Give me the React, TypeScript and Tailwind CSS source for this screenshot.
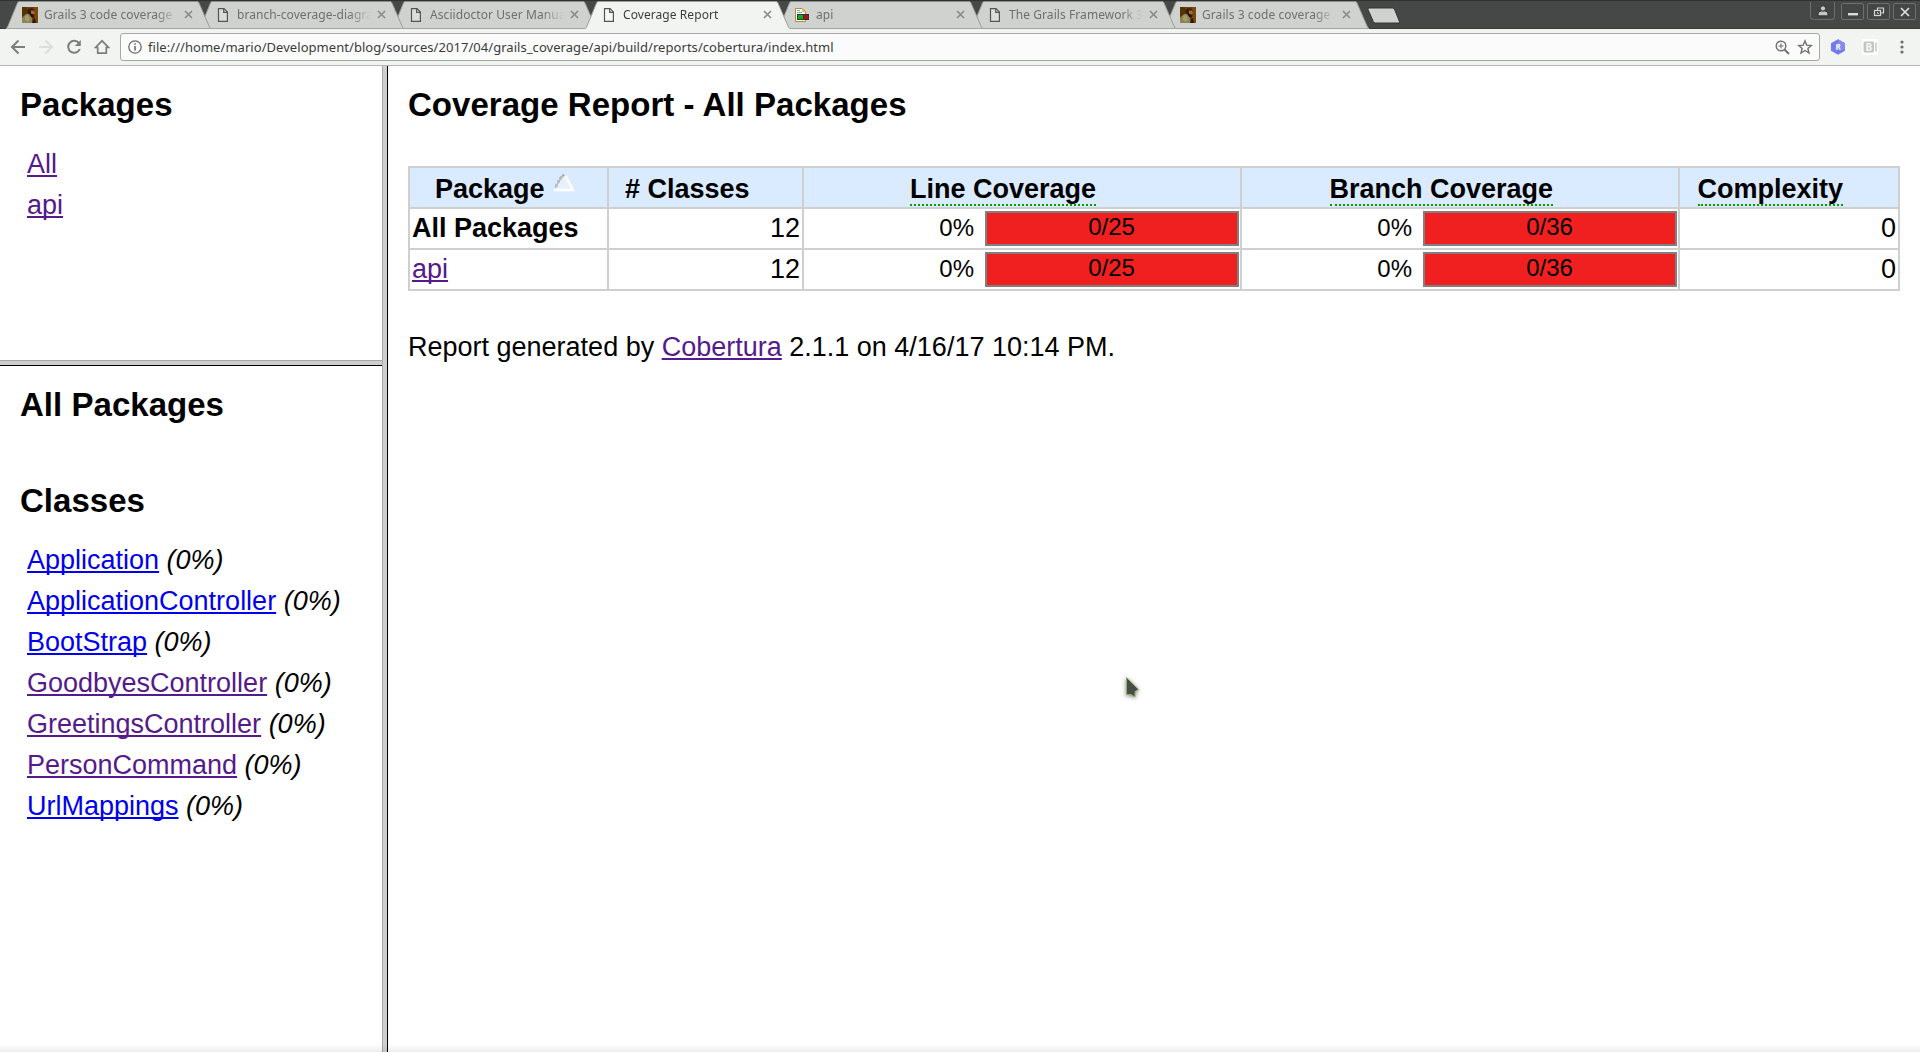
import { ReactNode } from "react";

type TabIcon = "photo" | "page" | "report";
interface Tab {
  title: string;
  icon: TabIcon;
  active?: boolean;
}

const tabs: Tab[] = [
  { title: "Grails 3 code coverage", icon: "photo" },
  { title: "branch-coverage-diagra", icon: "page" },
  { title: "Asciidoctor User Manua", icon: "page" },
  { title: "Coverage Report", icon: "page", active: true },
  { title: "api", icon: "report" },
  { title: "The Grails Framework 3", icon: "page" },
  { title: "Grails 3 code coverage", icon: "photo" },
];

const stack = ["z-[7]", "z-[6]", "z-[5]", "z-[8]", "z-[4]", "z-[3]", "z-[2]"];

const classes = [
  { name: "Application", visited: false },
  { name: "ApplicationController", visited: false },
  { name: "BootStrap", visited: false },
  { name: "GoodbyesController", visited: true },
  { name: "GreetingsController", visited: true },
  { name: "PersonCommand", visited: true },
  { name: "UrlMappings", visited: false },
];

function Favicon({ kind }: { kind: TabIcon }) {
  if (kind === "photo")
    return (
      <svg width="16" height="16" viewBox="0 0 16 16" className="shrink-0">
        <rect width="16" height="16" fill="#6b4005" />
        <rect width="5" height="9" fill="#573203" />
        <rect x="12" width="4" height="16" fill="#7a4b08" />
        <path d="M5 3 Q8 0 12 2 L13 6 L12 10 L9 10 L6 7 Z" fill="#3a1c0c" />
        <path d="M9 3.5 L12 3.5 L13 6 L12 8 L9 7 Z" fill="#a5683f" />
        <path d="M8 6 L12 8 L11.5 11 L8 9 Z" fill="#2a1108" />
        <path d="M0 11 L4 7 L7 7 L10 11 L11 16 L0 16 Z" fill="#8b8455" />
        <path d="M3 9 L6 8 L8 12 L6 15 L3 13 Z" fill="#a39b6b" />
        <path d="M11 12 L13 11 L14 16 L10 16 Z" fill="#301806" />
      </svg>
    );
  if (kind === "report")
    return (
      <svg width="16" height="16" viewBox="0 0 16 16" className="shrink-0">
        <path d="M1.5 1.5 H8.500 L11.5 4.5 V14.500 H1.5 Z" fill="#fff" stroke="#b08a3a" />
        <path d="M8 1 V5 H12 Z" fill="#e6bd57" />
        <path d="M3 3.5 H6 M3 5.5 H8" stroke="#7f9fd0" />
        <rect x="3.5" y="7.5" width="6" height="5" fill="#10b010" stroke="#333" />
        <rect x="9.5" y="7.5" width="5" height="5" fill="#b01018" stroke="#333" />
      </svg>
    );
  return (
    <svg width="16" height="16" viewBox="0 0 16 16" className="shrink-0">
      <path d="M3.5 1.6 H9 L12.4 5 V14.4 H3.5 Z" fill="#fff" fillOpacity=".25" stroke="#555" strokeWidth="1.2" />
      <path d="M8.7 1.6 V5.4 H12.4" fill="none" stroke="#555" strokeWidth="1.2" />
    </svg>
  );
}

function BrowserTab({ tab, order }: { tab: Tab; order: string }) {
  const fill = tab.active ? "#f2f4f2" : "#d0d2cf";
  const text = tab.active ? "text-[#3c3e3c]" : "text-[#6e706e]";
  return (
    <div className={`relative -ml-3 flex h-[29px] w-[205px] shrink-0 items-center ${order}`}>
      <svg width="205" height="29" className="absolute inset-0">
        <path d="M0 29 L2 26 L11.5 3 Q12 1.5 13.5 1.5 H191 Q192.500 1.500 193 3 L203 26 L205 29 Z" fill={fill} />
        <path
          d="M0.500 28.500 L2 26 L11.500 3 Q12 1.500 13.500 1.500 M191 1.500 Q192.500 1.500 193 3 L203 26 L204.500 28.500"
          fill="none"
          stroke="#9c9e9c"
        />
        {!tab.active && <path d="M0 28.500 H205" stroke="#a4a6a4" />}
      </svg>
      <div className="relative flex w-full items-center pl-4">
        <Favicon kind={tab.icon} />
        <div className="ml-1.5 w-[135px] [mask-image:linear-gradient(to_right,black_112px,transparent_134px)]">
          <span className={`block text-[12px] leading-[18px] tracking-[0.07px] whitespace-nowrap ${text}`}>{tab.title}</span>
        </div>
        <svg width="9" height="9" viewBox="0 0 9 9" className="ml-[5px] shrink-0">
          <path d="M1 1 L8 8 M8 1 L1 8" stroke="#8a8c8a" strokeWidth="1.7" />
        </svg>
      </div>
    </div>
  );
}

function WindowButton({ children }: { children: ReactNode }) {
  return (
    <div className="flex h-[17px] w-[23px] items-center justify-center rounded-[2px] border border-[#6d6f6d] bg-[#434644]">
      {children}
    </div>
  );
}

function TabStrip() {
  return (
    <div className="flex h-[29px] border-b border-[#393b39] bg-[#454846] pl-[18px] shadow-[inset_0_1px_0_#303230]">
      {tabs.map((t, i) => (
        <BrowserTab key={i} tab={t} order={stack[i]} />
      ))}
      <svg width="36" height="20" viewBox="0 0 36 20" className="mt-[6px] -ml-[3px]">
        <path d="M3 2 H26.500 Q28 2 28.800 4 L34 17 H9.500 Q8 17 7.300 15.500 L2 3.500 Q2 2 3 2 Z" fill="#d0d2cf" stroke="#343634" />
      </svg>
      <div className="mt-[3px] mr-[4px] ml-auto flex gap-[3px]">
        <div className="mr-[3px] -mt-px flex h-[18px] w-[25px] items-center justify-center rounded-b border border-t-0 border-[#6d6f6d] bg-[#434644]">
          <svg width="12" height="12" viewBox="0 0 12 12" fill="#c4c6c4" stroke="#202220" strokeWidth=".8">
            <path d="M1 10.800 V9 Q1 6 4.500 6 H7.500 Q11 6 11 9 V10.800 Z" />
            <circle cx="6" cy="3.400" r="2.600" />
          </svg>
        </div>
        <WindowButton>
          <svg width="12" height="12" viewBox="0 0 12 12">
            <rect x="1" y="7" width="10" height="2.400" fill="#dadcda" />
          </svg>
        </WindowButton>
        <WindowButton>
          <svg width="12" height="12" viewBox="0 0 12 12" fill="none" stroke="#d4d6d4" strokeWidth="1.200">
            <path d="M4.500 4 V2 H10.500 V7 H8" />
            <rect x="1.500" y="4.500" width="6" height="5" />
            <path d="M4.500 6 V7.500 H6" strokeWidth=".8" />
          </svg>
        </WindowButton>
        <WindowButton>
          <svg width="12" height="12" viewBox="0 0 12 12">
            <path d="M2 2 L10 10 M10 2 L2 10" stroke="#dcdedc" strokeWidth="1.700" />
          </svg>
        </WindowButton>
      </div>
    </div>
  );
}

function Toolbar() {
  return (
    <div className="flex h-[37px] items-center border-b border-[#b4b6b4] bg-[#f2f4f2]">
      <div className="flex items-center gap-3 pl-[10px]">
        <svg width="16" height="16" viewBox="0 0 16 16" fill="none" stroke="#7c7e7c" strokeWidth="2">
          <path d="M15 8 H2.500 M8.500 1.500 L2 8 L8.500 14.500" />
        </svg>
        <svg width="16" height="16" viewBox="0 0 16 16" fill="none" stroke="#dcdedc" strokeWidth="2">
          <path d="M1 8 H13.500 M7.500 1.500 L14 8 L7.500 14.500" />
        </svg>
        <svg width="16" height="16" viewBox="0 0 16 16">
          <path d="M13 4.200 A6 6 0 1 0 13.800 10" fill="none" stroke="#7c7e7c" strokeWidth="2" />
          <path d="M14.800 1 V7 H8.800 Z" fill="#7c7e7c" />
        </svg>
        <svg width="16" height="16" viewBox="0 0 16 16" fill="none" stroke="#7c7e7c" strokeWidth="1.700">
          <path d="M1.500 8.500 L8 1.800 L14.500 8.500 H12.300 V14.200 H3.700 V8.500 Z" />
        </svg>
      </div>
      <div className="ml-[10px] flex h-7 w-[1700px] items-center rounded-[3px] border border-[#a6a8a6] bg-[#fafbfa]">
        <svg width="14" height="14" viewBox="0 0 14 14" className="ml-[7px]">
          <circle cx="7" cy="7" r="6.200" fill="none" stroke="#6a6c6a" strokeWidth="1.300" />
          <path d="M7 6 V10.500 M7 3.300 V4.800" stroke="#6a6c6a" strokeWidth="1.600" />
        </svg>
        <span className="ml-[6px] text-[13px] leading-[20px] tracking-[0.05px] whitespace-nowrap text-[#3a3c3a]">
          file:///home/mario/Development/blog/sources/2017/04/grails_coverage/api/build/reports/cobertura/index.html
        </span>
        <svg width="15" height="15" viewBox="0 0 15 15" className="ml-auto" fill="none" stroke="#6e706e">
          <circle cx="6" cy="6" r="4.800" strokeWidth="1.400" />
          <path d="M9.500 9.500 L14 14" strokeWidth="1.900" />
          <path d="M3.500 6 H8.500 M6 3.500 V8.500" strokeWidth="1.100" />
        </svg>
        <svg width="16" height="16" viewBox="0 0 16 16" className="mr-[6px] ml-[7px]" fill="none" stroke="#6e706e" strokeWidth="1.400">
          <path d="M8 1.900 L9.800 6.200 L14.300 6.500 L10.900 9.400 L12 14 L8 11.500 L4 14 L5.100 9.400 L1.700 6.500 L6.200 6.200 Z" />
        </svg>
      </div>
      <div className="flex items-center pl-[10px]">
        <div className="relative flex h-4 w-4 items-center justify-center">
          <svg width="16" height="16" viewBox="0 0 16 16" className="absolute inset-0">
            <path d="M8 0.300 L15 4.200 V11.800 L8 15.700 L1 11.800 V4.200 Z" fill="#7279ee" />
            <path d="M8 0.300 L15 4.200 V11.800 L8 8 Z" fill="#858bf4" />
          </svg>
          <span className="relative text-[8px] leading-none font-bold text-white">R</span>
        </div>
        <div className="relative ml-4 flex h-4 w-4 bg-white">
          <svg width="16" height="16" viewBox="0 0 16 16" className="absolute inset-0">
            <rect x="1.500" y="2.500" width="10.500" height="11" rx="1.500" fill="#c4c4c4" />
            <path d="M14 3.500 V12.500" stroke="#c0c0c0" strokeWidth="1.400" />
          </svg>
          <span className="relative ml-[3.500px] text-[10px] leading-[16px] font-bold text-[#f6f6f6]">B</span>
        </div>
        <svg width="4" height="14" viewBox="0 0 4 14" className="ml-[22px]" fill="#6a6c6a">
          <circle cx="2" cy="2" r="1.600" />
          <circle cx="2" cy="7" r="1.600" />
          <circle cx="2" cy="12" r="1.600" />
        </svg>
      </div>
    </div>
  );
}

function Link({ children, visited = true }: { children: ReactNode; visited?: boolean }) {
  return (
    <a
      className={`underline decoration-2 underline-offset-[2px] [text-decoration-skip-ink:none] ${
        visited ? "text-[#551a8b]" : "text-[#0000ee]"
      }`}
    >
      {children}
    </a>
  );
}

function Heading({ children }: { children: ReactNode }) {
  return <h5 className="text-[33px] leading-[38px] font-bold tracking-[0.03px] whitespace-nowrap">{children}</h5>;
}

function Term({ children }: { children: ReactNode }) {
  return <span className="border-b-2 border-dotted border-[#00a000]">{children}</span>;
}

function Coverage({ ratio }: { ratio: string }) {
  return (
    <div className="flex items-start bg-white pt-0.5 pr-px text-[24px]">
      <span className="ml-auto pr-[11px] leading-[34px]">0%</span>
      <div className="h-[35px] w-[254px] border-2 border-[#808080] bg-[#f02020] pr-px text-center leading-[28px]">{ratio}</div>
    </div>
  );
}

function Row({ name }: { name: ReactNode }) {
  return (
    <>
      <div className="bg-white pl-0.5">{name}</div>
      <div className="bg-white pr-0.5 text-right">12</div>
      <Coverage ratio="0/25" />
      <Coverage ratio="0/36" />
      <div className="bg-white pr-0.5 text-right">0</div>
    </>
  );
}

export default function App() {
  return (
    <div className="relative flex h-[1052px] w-[1920px] flex-col overflow-hidden bg-white font-['Noto_Sans','Open_Sans',sans-serif]">
      <TabStrip />
      <Toolbar />
      <div className="flex min-h-0 flex-1 font-['Liberation_Sans',Arial,sans-serif] text-[27px] text-black">
        <div className="flex w-[382px] flex-col">
          <div className="h-[294px] pt-5 pl-5">
            <Heading>Packages</Heading>
            <ul className="mt-5 pl-[7px] leading-[41px]">
              <li><Link>All</Link></li>
              <li><Link>api</Link></li>
            </ul>
          </div>
          <div className="h-[6px] border-t border-b border-t-[#a8a8a8] border-b-black bg-[#cfcfcf]" />
          <div className="flex-1 pt-5 pl-5">
            <Heading>All Packages</Heading>
            <div className="mt-[58px]">
              <Heading>Classes</Heading>
            </div>
            <ul className="mt-5 pl-[7px] leading-[41px] whitespace-nowrap">
              {classes.map((c) => (
                <li key={c.name}>
                  <Link visited={c.visited}>{c.name}</Link> <i>(0%)</i>
                </li>
              ))}
            </ul>
          </div>
        </div>
        <div className="w-[6px] border-r border-l border-l-[#a8a8a8] border-r-black bg-[#cfcfcf]" />
        <div className="flex-1 pt-5 pl-5">
          <Heading>Coverage Report - All Packages</Heading>
          <div className="mt-[42px] grid w-[1492px] grid-cols-[197px_193px_436px_436px_218px] grid-rows-[39px_39px_39px] gap-0.5 bg-[#cfcfcf] p-0.5 leading-[39px] whitespace-nowrap">
            <div className="flex bg-[#dbebff] pl-[25px] leading-[42px] font-bold">
              Package
              <svg width="20" height="18" viewBox="0 0 20 18" className="mt-[6px] ml-[9px]">
                <path d="M1 15 L8 1 H11 L19 15 Z" fill="#e6f1fd" />
                <path d="M8 1.500 H10.500 M6.500 3 V6 M4.500 6 V9 M2.500 10 V13 M7.500 2 V4" fill="none" stroke="#a0a4a8" strokeWidth="2" />
                <path d="M1 14 L4 9 L8 2" fill="none" stroke="#b8bdc4" strokeWidth="1.500" />
                <path d="M11.500 2 L18.500 15 M0 16 H20" fill="none" stroke="#fff" strokeWidth="2.400" />
              </svg>
            </div>
            <div className="bg-[#dbebff] pl-4 leading-[42px] font-bold"># Classes</div>
            <div className="bg-[#dbebff] pl-[106px] leading-[42px] font-bold"><Term>Line Coverage</Term></div>
            <div className="bg-[#dbebff] pl-[87.500px] leading-[42px] font-bold"><Term>Branch Coverage</Term></div>
            <div className="bg-[#dbebff] pl-[17.500px] leading-[42px] font-bold"><Term>Complexity</Term></div>
            <Row name={<b>All Packages</b>} />
            <Row name={<Link>api</Link>} />
          </div>
          <p className="mt-9 leading-[41px]">
            Report generated by <Link>Cobertura</Link> 2.1.1 on 4/16/17 10:14 PM.
          </p>
        </div>
      </div>
      <div className="absolute inset-x-0 bottom-0 h-2 bg-linear-to-b from-transparent to-black/7" />
      <svg width="20" height="28" viewBox="0 0 20 28" className="absolute top-[675px] left-[1123px] drop-shadow-[0_1px_2px_rgba(0,0,0,0.5)]">
        <path d="M3.500 2.500 L15.500 14.500 L12 16.500 L12 22 L8 19.500 H3.500 Z" fill="#4b4b4b" stroke="#87b85c" />
      </svg>
    </div>
  );
}
